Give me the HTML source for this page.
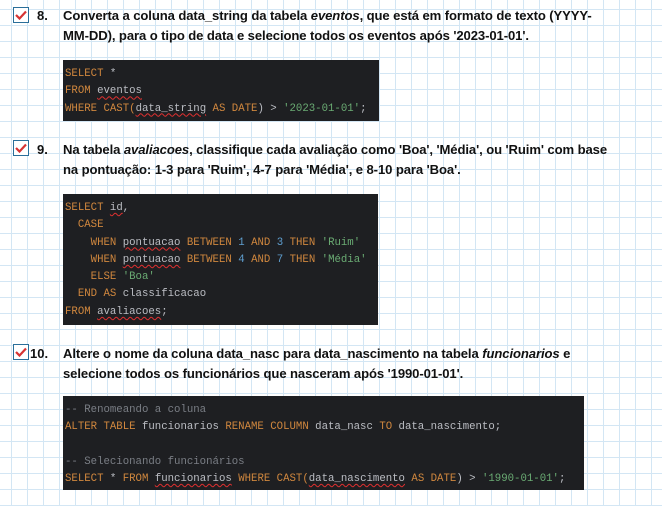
<!DOCTYPE html>
<html><head><meta charset="utf-8"><style>
body{margin:0;width:662px;height:506px;overflow:hidden;position:relative;
background-color:#fff;
background-image:linear-gradient(to right,#d3e6f4 1px,transparent 1px),linear-gradient(to bottom,#d3e6f4 1px,transparent 1px);
background-size:16px 16px;background-position:11px 9px;
font-family:"Liberation Sans",sans-serif;}
.cb{position:absolute;left:13px;width:14px;height:14px;border:1px solid #2a6f9a;background:#fff;}
.cb svg{position:absolute;left:1px;top:2px}
.num{position:absolute;font-weight:bold;font-size:13px;color:#111;}
.t{position:absolute;left:63px;font-weight:bold;font-size:13.1px;color:#111;line-height:20px;white-space:nowrap;letter-spacing:-0.1px}
.code{position:absolute;left:63px;background:#1e1f22;font-family:"Liberation Mono",monospace;font-size:10.7px;color:#bcbec4;white-space:pre;padding:6px 0 0 2px;line-height:17.3px;box-sizing:border-box}
.k{color:#d0873e}.s{color:#6aab73}.n{color:#5f9fd0}.c{color:#7a7e85}
.w{text-decoration:underline wavy #e03030;text-decoration-thickness:1px;text-underline-offset:2px}
</style></head><body>
<div class="cb" style="top:7px"><svg width="12" height="10" viewBox="0 0 12 10"><path d="M1 5 L4.5 8.5 L11 1.5" stroke="#d63333" stroke-width="2.2" fill="none"/></svg></div>
<div class="num" style="left:37px;top:8px">8.</div>
<div class="t" style="top:6px">Converta a coluna data_string da tabela <i>eventos</i>, que está em formato de texto (YYYY-<br>MM-DD), para o tipo de data e selecione todos os eventos após '2023-01-01'.</div>
<div class="code" style="top:60px;width:316px;height:61px"><span class="k">SELECT</span> *
<span class="k">FROM</span> <span class="w">eventos</span>
<span class="k">WHERE CAST(</span><span class="w">data_string</span> <span class="k">AS DATE</span>) &gt; <span class="s">'2023-01-01'</span>;</div>

<div class="cb" style="top:140px"><svg width="12" height="10" viewBox="0 0 12 10"><path d="M1 5 L4.5 8.5 L11 1.5" stroke="#d63333" stroke-width="2.2" fill="none"/></svg></div>
<div class="num" style="left:37px;top:142px">9.</div>
<div class="t" style="top:140px">Na tabela <i>avaliacoes</i>, classifique cada avaliação como 'Boa', 'Média', ou 'Ruim' com base<br>na pontuação: 1-3 para 'Ruim', 4-7 para 'Média', e 8-10 para 'Boa'.</div>
<div class="code" style="top:194px;width:315px;height:131px"><span class="k">SELECT</span> <span class="w">id</span>,
  <span class="k">CASE</span>
    <span class="k">WHEN</span> <span class="w">pontuacao</span> <span class="k">BETWEEN</span> <span class="n">1</span> <span class="k">AND</span> <span class="n">3</span> <span class="k">THEN</span> <span class="s">'Ruim'</span>
    <span class="k">WHEN</span> <span class="w">pontuacao</span> <span class="k">BETWEEN</span> <span class="n">4</span> <span class="k">AND</span> <span class="n">7</span> <span class="k">THEN</span> <span class="s">'Média'</span>
    <span class="k">ELSE</span> <span class="s">'Boa'</span>
  <span class="k">END AS</span> classificacao
<span class="k">FROM</span> <span class="w">avaliacoes</span>;</div>

<div class="cb" style="top:344px"><svg width="12" height="10" viewBox="0 0 12 10"><path d="M1 5 L4.5 8.5 L11 1.5" stroke="#d63333" stroke-width="2.2" fill="none"/></svg></div>
<div class="num" style="left:30px;top:346px">10.</div>
<div class="t" style="top:344px">Altere o nome da coluna data_nasc para data_nascimento na tabela <i>funcionarios</i> e<br>selecione todos os funcionários que nasceram após '1990-01-01'.</div>
<div class="code" style="top:396px;width:521px;height:94px"><span class="c">-- Renomeando a coluna</span>
<span class="k">ALTER TABLE</span> funcionarios <span class="k">RENAME COLUMN</span> data_nasc <span class="k">TO</span> data_nascimento;

<span class="c">-- Selecionando funcionários</span>
<span class="k">SELECT</span> * <span class="k">FROM</span> <span class="w">funcionarios</span> <span class="k">WHERE CAST(</span><span class="w">data_nascimento</span> <span class="k">AS DATE</span>) &gt; <span class="s">'1990-01-01'</span>;</div>
</body></html>
